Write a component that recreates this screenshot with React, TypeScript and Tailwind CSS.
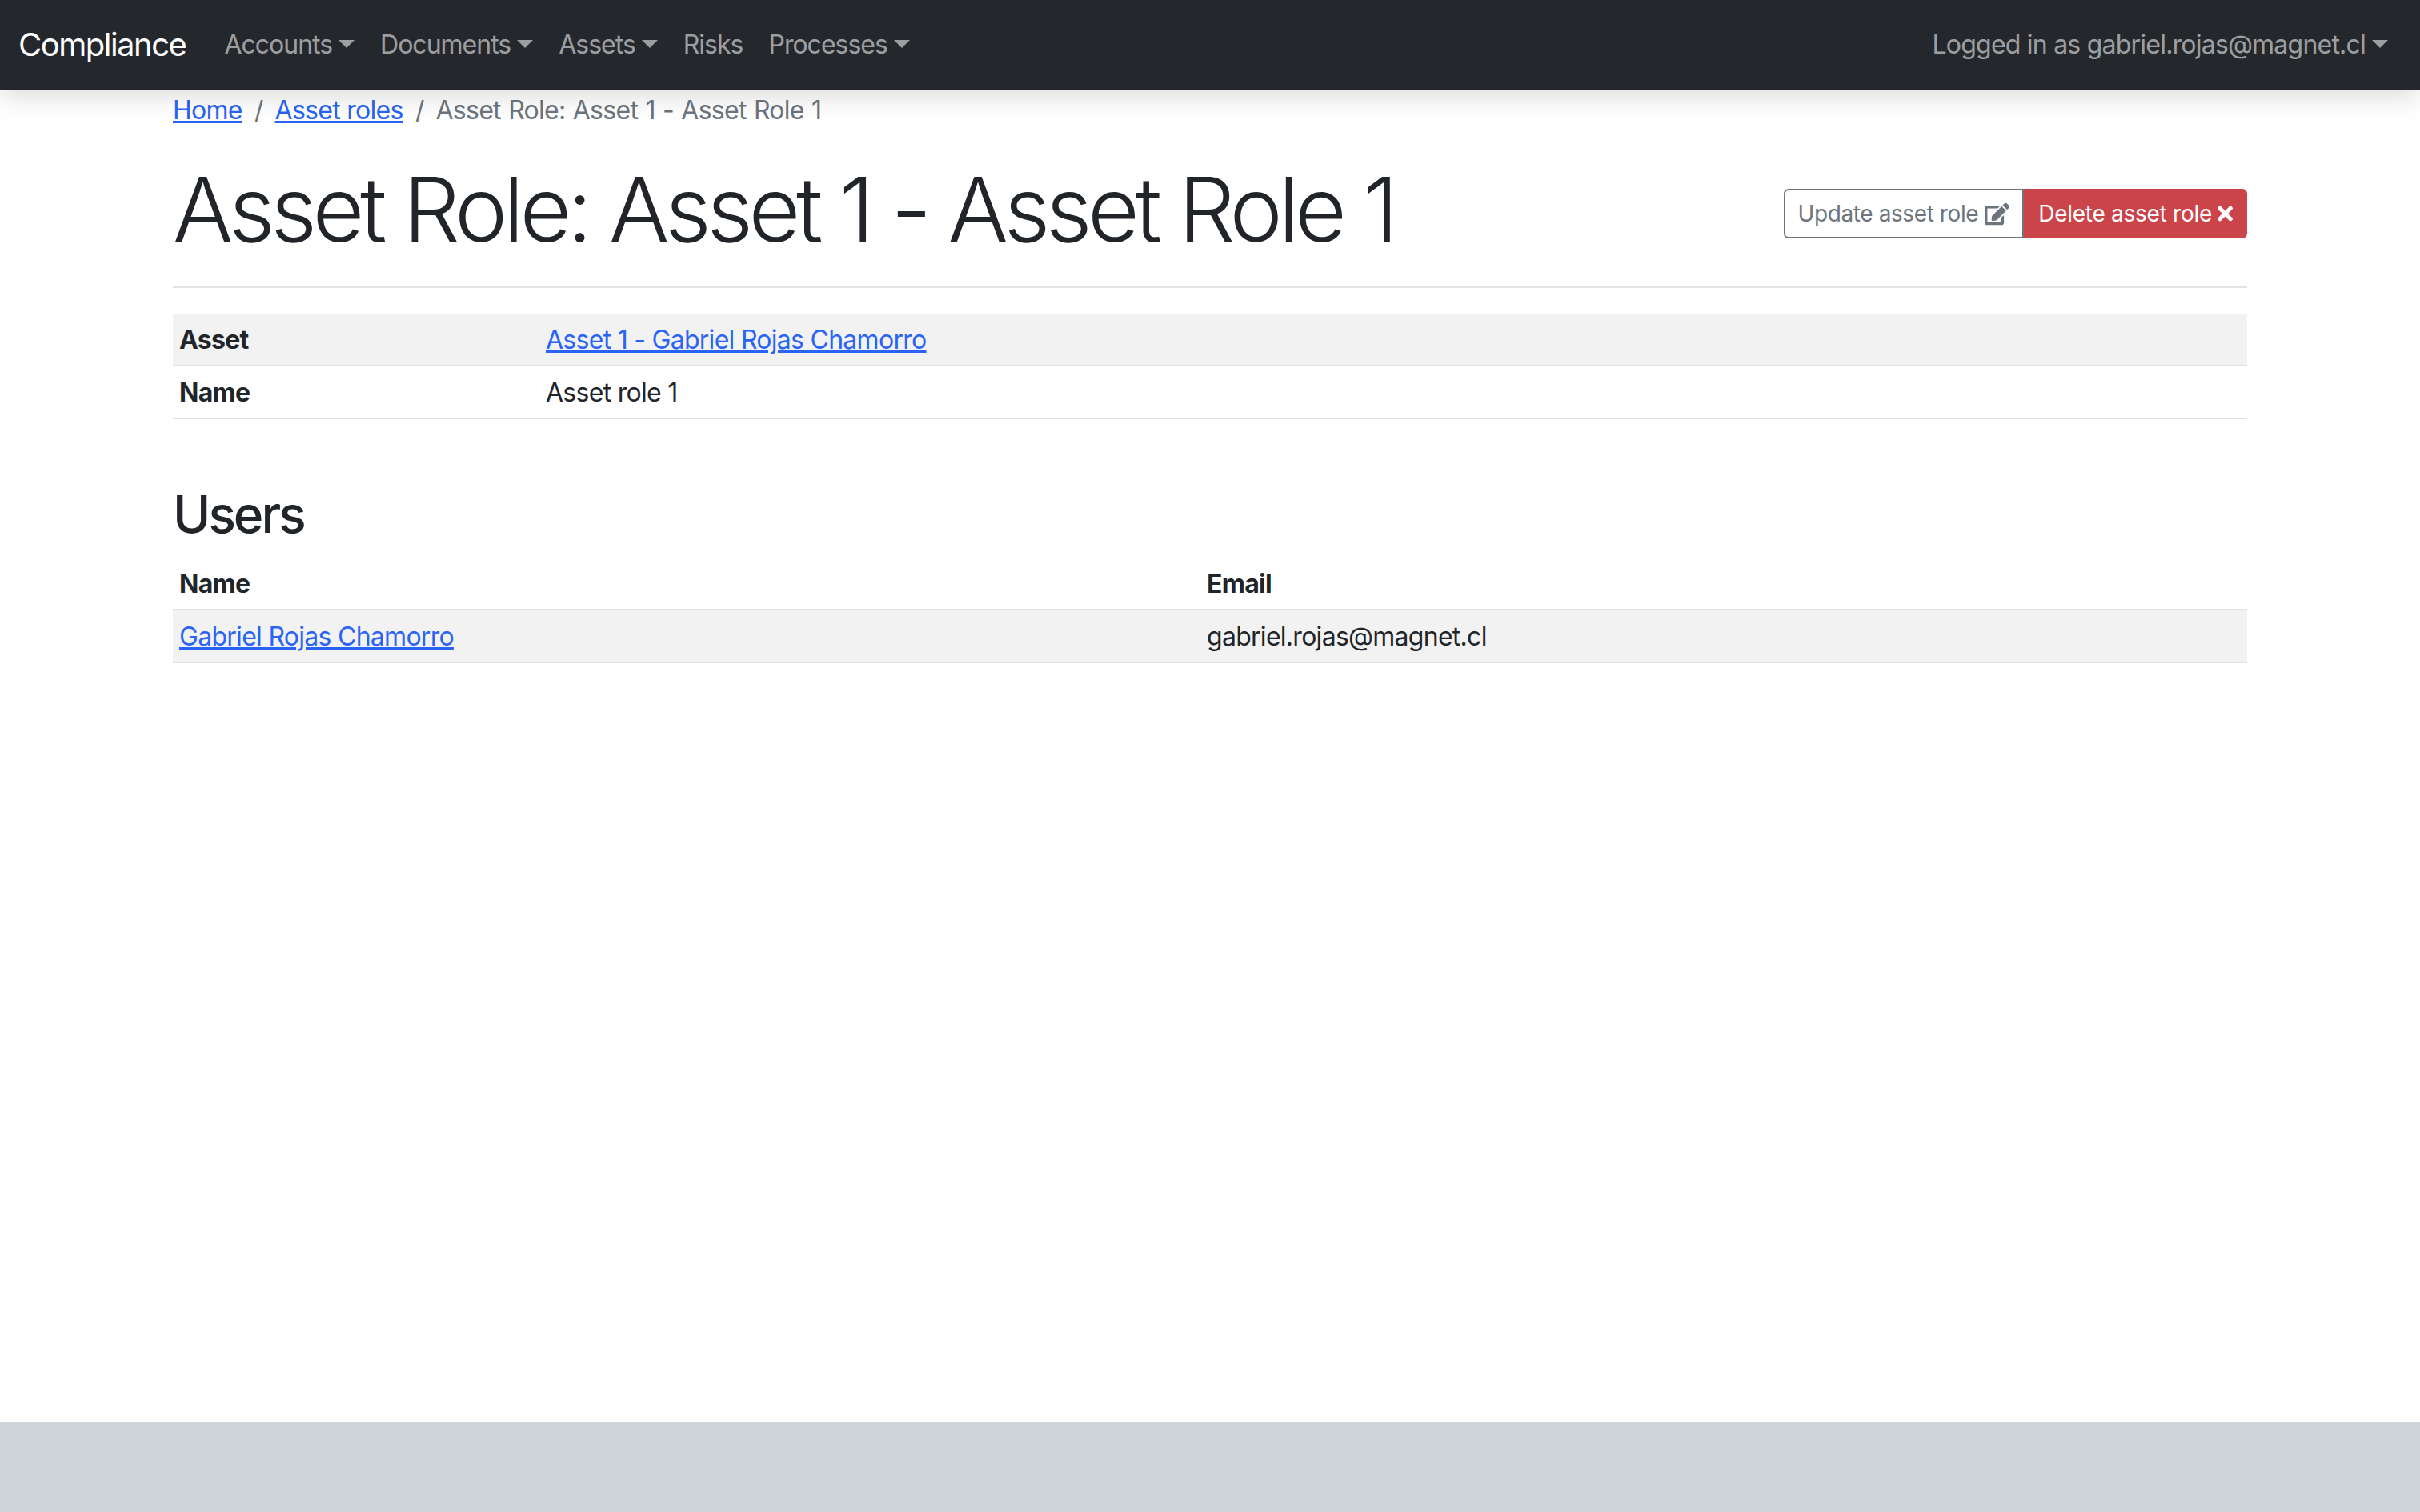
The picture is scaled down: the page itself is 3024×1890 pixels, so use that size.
import React from "react";
import { FaEdit, FaTimes } from "react-icons/fa";

const Caret = () => (
  <span className="ml-[8px] mt-[-2px] border-x-[10px] border-t-[10px] border-x-transparent border-t-white/55" />
);

const NavLink: React.FC<{ label: string; caret?: boolean }> = ({ label, caret = true }) => (
  <a className="flex items-center px-4 tracking-[-1px] text-white/55">
    {label}
    {caret && <Caret />}
  </a>
);

const linkClass = "text-[#2a64f6] underline";
const cellClass = "px-2 pb-[7px] pt-[9px]";
const headClass = "px-2 pb-[7px] pt-[9px] text-left font-bold";

export default function App() {
  return (
    <div className="flex min-h-[1890px] flex-col bg-white font-['Inter',sans-serif] text-[32px] leading-[48px] tracking-[-0.72px] text-[#212529]">
      <nav className="z-10 flex h-[112px] items-center justify-between bg-[#24272c] pl-[23px] pr-10 shadow-[0_8px_32px_rgba(0,0,0,0.15)]">
        <div className="flex items-center">
          <a className="mr-8 text-[40px] tracking-[-1.5px] text-white">Compliance</a>
          <NavLink label="Accounts" />
          <NavLink label="Documents" />
          <NavLink label="Assets" />
          <NavLink label="Risks" caret={false} />
          <NavLink label="Processes" />
        </div>
        <a className="flex items-center tracking-[-0.78px] text-white/55">
          Logged in as gabriel.rojas@magnet.cl
          <Caret />
        </a>
      </nav>

      <main className="mx-auto w-[2592px] flex-1">
        <ol className="mt-[2px] flex h-[48px] items-center">
          <li><a className={linkClass}>Home</a></li>
          <li className="px-[15px] text-[#6c757d]">/</li>
          <li><a className={linkClass}>Asset roles</a></li>
          <li className="px-[15px] text-[#6c757d]">/</li>
          <li className="text-[#6c757d] [word-spacing:1px]">Asset Role: Asset 1 - Asset Role 1</li>
        </ol>

        <div className="mt-[32px] flex items-center justify-between">
          <h1 className="text-[112px] font-light leading-[134px] tracking-[-5.5px]">Asset Role: Asset 1 - Asset Role 1</h1>
          <div className="mt-[12px] flex text-[28px] leading-[42px] tracking-[-0.27px]">
            <a className="flex items-center gap-[8px] rounded-l-[6px] border-2 border-[#6c757d] px-4 py-2 tracking-[-0.4px] text-[#6c757d]">
              Update asset role <FaEdit className="text-[31px]" />
            </a>
            <a className="flex items-center gap-[7px] rounded-r-[6px] border-2 border-[#cb444a] bg-[#cb444a] px-4 py-2 text-white">
              Delete asset role <FaTimes className="h-[28px] w-[19px]" />
            </a>
          </div>
        </div>

        <hr className="mt-[30px] border-t-2 border-[#e1e4e7]" />

        <table className="mt-[32px] w-full border-collapse">
          <tbody>
            <tr className="border-b-2 border-[#dee2e6] bg-[#f2f2f2]">
              <th className={`w-[458px] ${headClass}`}>Asset</th>
              <td className={cellClass}><a className={linkClass}>Asset 1 - Gabriel Rojas Chamorro</a></td>
            </tr>
            <tr className="border-b-2 border-[#dee2e6]">
              <th className={headClass}>Name</th>
              <td className={cellClass}>Asset role 1</td>
            </tr>
          </tbody>
        </table>

        <h2 className="mt-[80px] text-[64px] font-medium leading-[77px] tracking-[-3px]">Users</h2>

        <table className="mt-[16px] w-full border-collapse">
          <thead>
            <tr className="border-b-2 border-[#dee2e6]">
              <th className={`w-[1284px] ${headClass}`}>Name</th>
              <th className={headClass}>Email</th>
            </tr>
          </thead>
          <tbody>
            <tr className="border-b-2 border-[#dee2e6] bg-[#f2f2f2]">
              <td className={cellClass}><a className={linkClass}>Gabriel Rojas Chamorro</a></td>
              <td className={cellClass}>gabriel.rojas@magnet.cl</td>
            </tr>
          </tbody>
        </table>
      </main>

      <footer className="h-[112px] bg-[#cfd4d8]" />
    </div>
  );
}
